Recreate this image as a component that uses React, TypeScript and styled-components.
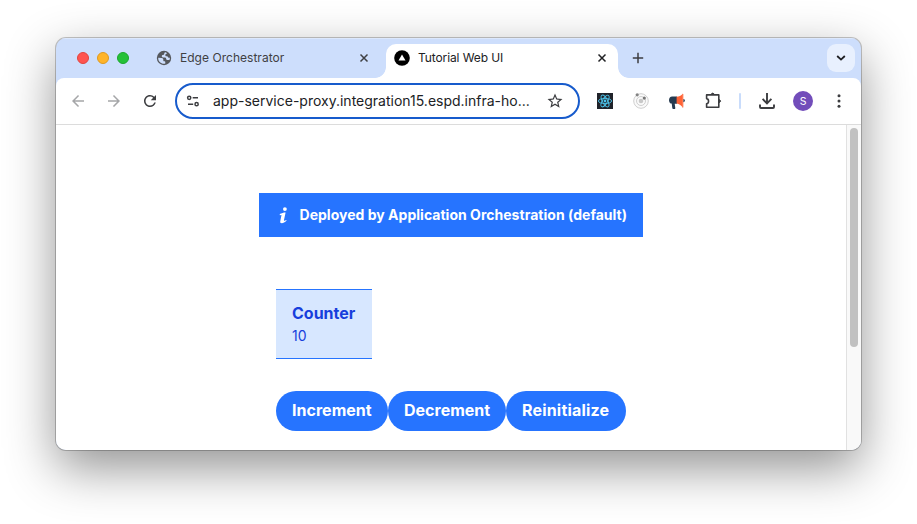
import React from 'react';
import styled, { createGlobalStyle } from 'styled-components';
import {
  MdArrowBack,
  MdArrowForward,
  MdRefresh,
  MdStarBorder,
} from 'react-icons/md';

const GlobalStyle = createGlobalStyle`
  * { box-sizing: border-box; }
  html, body { margin: 0; background: #fff; overflow: hidden; }
  body { font-family: Inter, "Liberation Sans", sans-serif; }
  button { font: inherit; border: 0; padding: 0; background: none; color: inherit; }
  svg { display: block; flex: none; }
`;

const Desktop = styled.main`
  width: 917px;
  height: 524px;
  padding: 38px 56px 74px;
  overflow: hidden;
`;

const BrowserWindow = styled.section`
  display: flex;
  flex-direction: column;
  width: 805px;
  height: 412px;
  border-radius: 10px;
  overflow: hidden;
  background: #cddefc;
  box-shadow: 0 0 0 1px rgba(0, 0, 0, 0.22), 0 18px 50px rgba(0, 0, 0, 0.43);
`;

const TabStrip = styled.header`
  display: flex;
  flex: none;
  height: 40px;
  padding: 6px 6px 0 21px;
  box-shadow: inset 0 1px #dce8fd;
`;

const TrafficLights = styled.div`
  display: flex;
  gap: 8px;
  width: 70px;
  padding-top: 8px;
`;

const Light = styled.i<{ $fill: string; $edge: string }>`
  width: 12px;
  height: 12px;
  border-radius: 50%;
  background: ${(p) => p.$fill};
  border: 1px solid ${(p) => p.$edge};
`;

const Tab = styled.div<{ $active?: boolean }>`
  position: relative;
  display: flex;
  align-items: center;
  width: ${(p) => (p.$active ? 232 : 239)}px;
  height: 34px;
  padding: 0 10px 6px ${(p) => (p.$active ? 8 : 9)}px;
  border-radius: 10px 10px 0 0;
  background: ${(p) => (p.$active ? '#fff' : 'transparent')};
  color: ${(p) => (p.$active ? '#202124' : '#3f4043')};

  &::before, &::after {
    content: '';
    display: ${(p) => (p.$active ? 'block' : 'none')};
    position: absolute;
    bottom: 0;
    width: 11px;
    height: 11px;
  }
  &::before { left: -11px; background: radial-gradient(circle at 0 0, transparent 10.5px, #fff 11.2px); }
  &::after { right: -11px; background: radial-gradient(circle at 100% 0, transparent 10.5px, #fff 11.2px); }
`;

const TabTitle = styled.span<{ $spacing: number }>`
  flex: 1;
  margin-left: 8px;
  font-size: 12px;
  line-height: 16px;
  white-space: nowrap;
  letter-spacing: ${(p) => p.$spacing}px;
`;

const CloseButton = styled.button<{ $inset: number }>`
  margin-right: ${(p) => p.$inset}px;
`;

const NewTab = styled.button`
  width: 40px;
  padding: 0 0 6px 14px;
`;

const TabSearch = styled.button`
  display: grid;
  place-items: center;
  width: 28px;
  height: 28px;
  margin-left: auto;
  border-radius: 9px;
  background: #e8f0fe;
`;

const Toolbar = styled.nav`
  display: flex;
  align-items: center;
  flex: none;
  height: 47px;
  padding-left: 13px;
  border-radius: 8px 8px 0 0;
  border-bottom: 1px solid #dcdcdc;
  background: #fff;
`;

const ToolButton = styled.button<{ $width?: number; $tone?: string }>`
  display: grid;
  place-items: center;
  flex: none;
  width: ${(p) => p.$width ?? 36}px;
  height: 36px;
  color: ${(p) => p.$tone ?? '#3c3d40'};
`;

const AddressBar = styled.div`
  display: flex;
  align-items: center;
  width: 405px;
  height: 36px;
  margin: 0 7px 0 16px;
  padding: 0 14px 0 9px;
  border: 2px solid #175bcc;
  border-radius: 18px;
`;

const Url = styled.span`
  flex: 1;
  margin-left: 13px;
  font-size: 14px;
  line-height: 20px;
  white-space: nowrap;
  color: #202124;
`;

const Divider = styled.i`
  width: 2px;
  height: 16px;
  margin: 0 8px;
  border-radius: 1px;
  background: #c9dcfb;
`;

const Avatar = styled.span`
  display: grid;
  place-items: center;
  width: 20px;
  height: 20px;
  border-radius: 50%;
  background: #724dba;
  color: #fff;
  font-size: 10.5px;
`;

const Viewport = styled.div`
  display: flex;
  flex: 1;
  min-height: 0;
  background: #fff;
`;

const Page = styled.article`
  display: flex;
  flex-direction: column;
  align-items: flex-start;
  flex: 1;
  padding: 68px 0 0 203px;
`;

const Banner = styled.div`
  display: flex;
  align-items: center;
  width: 384px;
  height: 44px;
  padding-left: 20px;
  background: #2674ff;
  color: #fff;
  font-size: 14px;
  font-weight: 700;
  letter-spacing: 0.02px;
  white-space: nowrap;
`;

const BannerText = styled.span`
  margin-left: 11.5px;
  padding-bottom: 2px;
`;

const CounterCard = styled.section`
  width: 96px;
  height: 70px;
  margin: 52px 0 0 17px;
  padding: 11px 16px 0;
  border: solid #2674ff;
  border-width: 1px 0;
  background: #d7e7ff;
  color: #173edc;
`;

const CounterTitle = styled.h2`
  margin: 0;
  font-size: 16px;
  line-height: 24px;
  font-weight: 700;
`;

const CounterValue = styled.p`
  margin: 0;
  font-size: 14px;
  font-weight: 400;
  line-height: 22px;
`;

const Actions = styled.div`
  display: flex;
  margin: 32px 0 0 17px;
`;

const ActionButton = styled.button<{ $width: number; $spacing: number }>`
  width: ${(p) => p.$width}px;
  height: 40px;
  padding: 0 0 2px 16px;
  border-radius: 20px;
  background: #2674ff;
  color: #fff;
  font-size: 16px;
  font-weight: 700;
  text-align: left;
  white-space: nowrap;
  letter-spacing: ${(p) => p.$spacing}px;
`;

const ScrollTrack = styled.div`
  width: 15px;
  padding: 3px 3px 0;
  border-left: 1px solid #e1e1e1;
  background: #f9f9f9;
`;

const ScrollThumb = styled.div`
  width: 8px;
  height: 219px;
  border-radius: 4px;
  background: #c1c1c1;
`;

const CloseIcon = () => (
  <svg width="10" height="10" viewBox="0 0 10 10" stroke="currentColor" strokeWidth="1.5">
    <path d="M1.5 1.5l7 7M8.5 1.5l-7 7" />
  </svg>
);

const GlobeIcon = () => (
  <svg width="16" height="16" viewBox="0 0 16 16">
    <circle cx="8" cy="8" r="7.2" fill="#55585d" />
    <path
      fill="#cddefc"
      d="M9.4 2.2C8.6 2.4 8.2 3 8.3 3.8c0 .8-.4 1.1-1.200 1.100-.9 0-1.300.5-1.300 1.300 0 .7.4 1.200 1.200 1.200h1.600c1.100 0 1.600.7 1.600 1.600 0 .6.4.9 1 .9h2.200c.3-.6.5-1.300.5-2.200-.7.3-1.500.1-1.800-.5-.3-.7-.8-.9-1.500-.9-.9 0-1.300-.6-1.300-1.300 0-.8.5-1.200 1.200-1.300.6-.1.700-.8-1.100-1.500z"
    />
    <path fill="#cddefc" d="M2.200 7.700l3.500.2c1.100.1 1.600.7 1.600 1.600v.9c0 .6.4.9 1 .9.700 0 1 .4 1 1v1.300c-3.700.9-7.300-1.900-7.100-5.900z" />
  </svg>
);

const TriangleLogo = () => (
  <svg width="16" height="16" viewBox="0 0 16 16">
    <circle cx="8" cy="8" r="7.8" fill="#000" />
    <path d="M8 4.4l3.5 6.2h-7z" fill="#fff" />
  </svg>
);

const SiteControlsIcon = () => (
  <svg width="14" height="14" viewBox="0 0 14 14" fill="none" stroke="#3c3d40" strokeWidth="1.5">
    <circle cx="3.2" cy="3.8" r="1.6" />
    <path d="M6.7 3.8H12M2 10.2H7.2" />
    <circle cx="10.6" cy="10.2" r="1.6" />
  </svg>
);

const ReactDevIcon = () => (
  <svg width="16" height="16" viewBox="0 0 16 16">
    <path fill="#20232a" d="M0 0h16v16H0z" />
    <g fill="none" stroke="#4cc3ea" strokeWidth="0.9">
      <ellipse cx="8" cy="8" rx="6.6" ry="2.6" />
      <ellipse cx="8" cy="8" rx="6.6" ry="2.6" transform="rotate(60 8 8)" />
      <ellipse cx="8" cy="8" rx="6.6" ry="2.6" transform="rotate(120 8 8)" />
    </g>
    <circle cx="8" cy="8" r="1.4" fill="#4cc3ea" />
  </svg>
);

const OrbitIcon = () => (
  <svg width="16" height="16" viewBox="0 0 16 16">
    <circle cx="8" cy="8" r="7.3" fill="#fafafa" stroke="#cfcfcf" />
    <circle cx="8" cy="8" r="4.5" fill="none" stroke="#cfcfcf" />
    <circle cx="8" cy="8" r="2.3" fill="#c8c8c8" />
    <circle cx="4.2" cy="1.8" r="1.6" fill="#838383" />
    <circle cx="11.3" cy="5.1" r="1.6" fill="#777" />
  </svg>
);

const MegaphoneIcon = () => (
  <svg width="16" height="16" viewBox="0 0 16 16">
    <path fill="#253a50" d="M8 3.6H3.2C1.2 3.6 0 5.2 0 7.2s1.2 3.4 2.7 3.4L3.3 15q.1.9.9.9h1.4q.8 0 .7-.9l-.6-4.2H8z" />
    <path fill="#ff6336" d="M7.6 3.8C10 3.8 12 2.8 14 .5v14.2c-2-2.4-4-4-6.4-4.2z" />
    <path fill="#ff8a68" d="M13.4 1h1v13.5h-1z" />
    <path fill="#253a50" d="M14.4 6c2 0 2 3.2 0 3.2z" />
  </svg>
);

const PuzzleIcon = () => (
  <svg width="18" height="18" viewBox="0 0 18 18" fill="none" stroke="currentColor" strokeWidth="1.6" strokeLinejoin="round">
    <path d="M2.6 2.9H14.8V15.3H2.6V11.8c2.6-.5 2.6-4.7 0-5.2z" />
    <path d="M7.1 2.3q1.6-2.4 3.2 0zM15.4 7.5q2.4 1.6 0 3.2z" fill="currentColor" strokeWidth="1" />
  </svg>
);

const DownloadIcon = () => (
  <svg width="16" height="16" viewBox="0 0 16 16" fill="none" stroke="currentColor" strokeWidth="1.9">
    <path d="M8 0v10M3.6 5.9L8 10.3l4.4-4.4M1 11.5V14q0 1 1 1h12q1 0 1-1v-2.5" />
  </svg>
);

const MenuIcon = () => (
  <svg width="4" height="14" viewBox="0 0 4 14" fill="currentColor">
    <circle cx="2" cy="1.7" r="1.5" />
    <circle cx="2" cy="7" r="1.5" />
    <circle cx="2" cy="12.3" r="1.5" />
  </svg>
);

const InfoIcon = () => (
  <svg width="9" height="17" viewBox="0 0 9 17" fill="#fff">
    <circle cx="5.9" cy="2.1" r="1.9" />
    <path d="M.7 7.1C2.7 5.9 4.4 5.4 6.6 5.4L5 13.1q-.2 1 .7.6l1.5-.8.4.8C5.8 15.3 4.3 16.2 2.9 16.2c-1.6 0-1.9-1-1.6-2.3L2.5 8 .9 8.3z" />
  </svg>
);

export default function App() {
  return (
    <>
      <GlobalStyle />
      <Desktop>
        <BrowserWindow>
          <TabStrip>
            <TrafficLights>
              <Light $fill="#ff5450" $edge="#e1443f" />
              <Light $fill="#ffb429" $edge="#de9a20" />
              <Light $fill="#25c138" $edge="#1ca72d" />
            </TrafficLights>
            <Tab>
              <GlobeIcon />
              <TabTitle $spacing={0.03}>Edge Orchestrator</TabTitle>
              <CloseButton aria-label="Close tab" $inset={7}><CloseIcon /></CloseButton>
            </Tab>
            <Tab $active>
              <TriangleLogo />
              <TabTitle $spacing={-0.1}>Tutorial Web UI</TabTitle>
              <CloseButton aria-label="Close tab" $inset={1}><CloseIcon /></CloseButton>
            </Tab>
            <NewTab aria-label="New tab">
              <svg width="12" height="12" viewBox="0 0 12 12" stroke="#3c3d40" strokeWidth="1.5">
                <path d="M6 .8v10.4M.8 6h10.4" />
              </svg>
            </NewTab>
            <TabSearch aria-label="Search tabs">
              <svg width="10" height="6" viewBox="0 0 10 6" fill="none" stroke="#1f2023" strokeWidth="1.8">
                <path d="M1.2 1L5 4.6 8.8 1" />
              </svg>
            </TabSearch>
          </TabStrip>

          <Toolbar>
            <ToolButton $width={18} aria-label="Back" $tone="#a5a6a8"><MdArrowBack size={18} /></ToolButton>
            <ToolButton $width={54} aria-label="Forward" $tone="#a5a6a8"><MdArrowForward size={18} /></ToolButton>
            <ToolButton $width={18} aria-label="Reload"><MdRefresh size={18} /></ToolButton>
            <AddressBar>
              <SiteControlsIcon />
              <Url>app-service-proxy.integration15.espd.infra-ho...</Url>
              <MdStarBorder size={18} color="#3c3d40" />
            </AddressBar>
            <ToolButton aria-label="React Developer Tools"><ReactDevIcon /></ToolButton>
            <ToolButton aria-label="Orbit extension"><OrbitIcon /></ToolButton>
            <ToolButton aria-label="Megaphone extension"><MegaphoneIcon /></ToolButton>
            <ToolButton aria-label="Extensions"><PuzzleIcon /></ToolButton>
            <Divider />
            <ToolButton aria-label="Downloads"><DownloadIcon /></ToolButton>
            <ToolButton aria-label="Profile"><Avatar>S</Avatar></ToolButton>
            <ToolButton aria-label="Menu"><MenuIcon /></ToolButton>
          </Toolbar>

          <Viewport>
            <Page>
              <Banner>
                <InfoIcon />
                <BannerText>Deployed by Application Orchestration (default)</BannerText>
              </Banner>
              <CounterCard>
                <CounterTitle>Counter</CounterTitle>
                <CounterValue>10</CounterValue>
              </CounterCard>
              <Actions>
                <ActionButton $width={112} $spacing={0.03}>Increment</ActionButton>
                <ActionButton $width={118} $spacing={0}>Decrement</ActionButton>
                <ActionButton $width={120} $spacing={0.18}>Reinitialize</ActionButton>
              </Actions>
            </Page>
            <ScrollTrack><ScrollThumb /></ScrollTrack>
          </Viewport>
        </BrowserWindow>
      </Desktop>
    </>
  );
}
